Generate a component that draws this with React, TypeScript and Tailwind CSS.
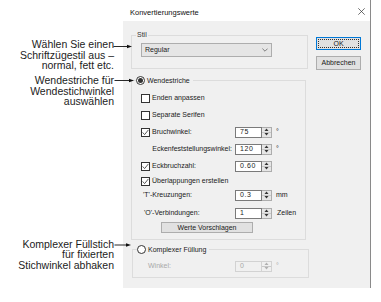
import React from "react";

const SANS = "font-['Liberation_Sans',Arial,sans-serif]";

function Check({ checked }: { checked?: boolean }) {
  return (
    <span className="w-[9px] h-[9px] border border-[#333333] bg-white shrink-0 flex items-center justify-center">
      {checked && (
        <svg width="7" height="7" viewBox="0 0 7 7">
          <path d="M0.6 3.4 L2.6 5.6 L6.4 0.9" fill="none" stroke="#333333" strokeWidth="0.8" />
        </svg>
      )}
    </span>
  );
}

function Radio({ checked }: { checked?: boolean }) {
  return (
    <span className="w-[9px] h-[9px] rounded-full border border-[#333333] bg-white shrink-0 flex items-center justify-center">
      {checked && <span className="w-[5px] h-[5px] rounded-full bg-[#333333]" />}
    </span>
  );
}

function Spin({ value, disabled }: { value: string; disabled?: boolean }) {
  const tri = disabled ? "#b0b0b0" : "#333333";
  return (
    <div className="flex h-[11px] shrink-0">
      <div
        className={
          disabled
            ? "w-[27px] h-full border border-[#d2d2d2] bg-[#f0f0f0] text-[#a8a8a8] flex items-center pl-[4px] text-[7px] tracking-[0.6px]"
            : "w-[27px] h-full border border-[#7a7a7a] bg-white text-[#222222] flex items-center pl-[4px] text-[7px] tracking-[0.6px]"
        }
      >
        {value}
      </div>
      <div
        className={
          disabled
            ? "w-[10px] h-full border-y border-r border-[#d2d2d2] bg-[#f0f0f0] flex flex-col"
            : "w-[10px] h-full border-y border-r border-[#adadad] bg-[#e6e6e6] flex flex-col"
        }
      >
        <div className="flex-1 flex items-center justify-center border-b border-[#c8c8c8]">
          <svg width="5" height="3" viewBox="0 0 5 3">
            <path d="M0.5 3 L2.5 0.5 L4.5 3 Z" fill={tri} />
          </svg>
        </div>
        <div className="flex-1 flex items-center justify-center">
          <svg width="5" height="3" viewBox="0 0 5 3">
            <path d="M0.5 0 L2.5 2.5 L4.5 0 Z" fill={tri} />
          </svg>
        </div>
      </div>
    </div>
  );
}

export default function App() {
  return (
    <div className={`relative w-[381px] h-[302px] bg-white flex overflow-hidden ${SANS}`}>
      {/* Annotation column */}
      <div className="w-[123px] shrink-0 flex flex-col items-end pr-[9px] text-[10.5px] leading-[10.5px] text-[#1c1c1c] text-right">
        <div className="mt-[39px]">
          <div>Wählen Sie einen</div>
          <div>Schriftzügestil aus –</div>
          <div>normal, fett etc.</div>
        </div>
        <div className="mt-[4.5px]">
          <div>Wendestriche für</div>
          <div>Wendestichwinkel</div>
          <div>auswählen</div>
        </div>
        <div className="mt-[132px]">
          <div>Komplexer Füllstich</div>
          <div>für fixierten</div>
          <div>Stichwinkel abhaken</div>
        </div>
      </div>

      {/* Dialog */}
      <div className="w-[248px] h-[288px] shrink-0 flex flex-col border-r border-[#8a8a8a]">
        {/* Title bar */}
        <div className="h-[21px] bg-white flex items-start justify-between pl-[7px] pr-[5px] shrink-0">
          <span className="mt-[8px] text-[7.5px] leading-[9px] text-[#111111]">Konvertierungswerte</span>
          <svg className="mt-[7.5px]" width="7" height="7" viewBox="0 0 7 7">
            <path d="M0.3 0.3 L6.7 6.7 M6.7 0.3 L0.3 6.7" stroke="#333333" strokeWidth="0.7" />
          </svg>
        </div>

        {/* Body */}
        <div className="flex-1 bg-[#f0f0f0] flex text-[7px] leading-[8px] text-[#1a1a1a]">
          <div className="w-[186px] shrink-0 pl-[8px] pt-[14px] flex flex-col">
            {/* Stil */}
            <div className="relative w-[177px] h-[34px] border border-[#dcdcdc] shrink-0">
              <span className="absolute left-[4px] -top-[5px] px-[1px] bg-[#f0f0f0] text-[#333333]">Stil</span>
              <div className="ml-[9px] mt-[7px] w-[131px] h-[14px] border border-[#adadad] bg-[#e5e5e5] flex items-center justify-between pl-[3px] pr-[3px]">
                <span>Regular</span>
                <svg width="6" height="4" viewBox="0 0 6 4">
                  <path d="M0.4 0.6 L3 3.2 L5.6 0.6" fill="none" stroke="#555555" strokeWidth="0.7" />
                </svg>
              </div>
            </div>

            {/* Wendestriche */}
            <div className="relative mt-[11px] w-[175px] h-[160px] border border-[#dcdcdc] shrink-0 flex flex-col pl-[9px]">
              <div className="absolute left-[4px] -top-[6px] h-[11px] pr-[3px] bg-[#f0f0f0] flex items-center gap-[2px]">
                <Radio checked />
                <span>Wendestriche</span>
              </div>

              <div className="mt-[11px] h-[12px] flex items-center gap-[2px]">
                <Check />
                <span>Enden anpassen</span>
              </div>
              <div className="mt-[5px] h-[12px] flex items-center gap-[2px]">
                <Check />
                <span>Separate Serifen</span>
              </div>
              <div className="mt-[5px] h-[12px] flex items-center">
                <div className="w-[94px] flex items-center gap-[2px]">
                  <Check checked />
                  <span>Bruchwinkel:</span>
                </div>
                <Spin value="75" />
                <span className="ml-[4px]">°</span>
              </div>
              <div className="mt-[5px] h-[12px] flex items-center">
                <div className="w-[94px] text-right pr-[3px]">Eckenfeststellungswinkel:</div>
                <Spin value="120" />
                <span className="ml-[4px]">°</span>
              </div>
              <div className="mt-[5px] h-[12px] flex items-center">
                <div className="w-[94px] flex items-center gap-[2px]">
                  <Check checked />
                  <span>Eckbruchzahl:</span>
                </div>
                <Spin value="0.60" />
              </div>
              <div className="mt-[3px] h-[12px] flex items-center gap-[2px]">
                <Check checked />
                <span>Überlappungen erstellen</span>
              </div>
              <div className="mt-[2px] h-[12px] flex items-center">
                <div className="w-[94px] pl-[2px]">'T'-Kreuzungen:</div>
                <Spin value="0.3" />
                <span className="ml-[4px]">mm</span>
              </div>
              <div className="mt-[6px] h-[12px] flex items-center">
                <div className="w-[94px] pl-[3px]">'O'-Verbindungen:</div>
                <Spin value="1" />
                <span className="ml-[5px]">Zeilen</span>
              </div>
              <div className="mt-[3px] ml-[20px] w-[92px] h-[11px] border border-[#adadad] bg-[#e1e1e1] flex items-center justify-center">
                Werte Vorschlagen
              </div>
            </div>

            {/* Komplexer Füllung */}
            <div className="relative mt-[9px] ml-[1px] w-[177px] h-[29px] border border-[#dcdcdc] shrink-0 flex flex-col pl-[15px]">
              <div className="absolute left-[4px] -top-[6px] h-[11px] pr-[3px] bg-[#f0f0f0] flex items-center gap-[2px]">
                <Radio />
                <span>Komplexer Füllung</span>
              </div>
              <div className="mt-[10px] h-[12px] flex items-center text-[#a8a8a8]">
                <div className="w-[87px]">Winkel:</div>
                <Spin value="0" disabled />
                <span className="ml-[4px]">°</span>
              </div>
            </div>
          </div>

          {/* Buttons */}
          <div className="ml-[7px] pt-[16px] flex flex-col gap-[6px]">
            <div className="w-[45px] h-[13px] border border-[#0078d7] bg-[#e1e1e1] p-[1px]">
              <div className="w-full h-full border border-dotted border-[#333333] flex items-center justify-center">
                OK
              </div>
            </div>
            <div className="w-[45px] h-[14px] border border-[#adadad] bg-[#e1e1e1] flex items-center justify-center">
              Abbrechen
            </div>
          </div>
        </div>
      </div>

      {/* Callout arrows */}
      <svg className="absolute inset-0 pointer-events-none" width="381" height="302" viewBox="0 0 381 302">
        <g stroke="#111111" strokeWidth="0.9" fill="#111111">
          <line x1="113.5" y1="46.5" x2="128" y2="46.5" />
          <path d="M127 44.8 L132 46.5 L127 48.2 Z" stroke="none" />
          <line x1="114.5" y1="80.5" x2="130" y2="80.5" />
          <path d="M129 78.8 L134 80.5 L129 82.2 Z" stroke="none" />
          <line x1="114.5" y1="245" x2="127" y2="245" />
          <path d="M126 243.3 L131 245 L126 246.7 Z" stroke="none" />
        </g>
      </svg>
    </div>
  );
}
